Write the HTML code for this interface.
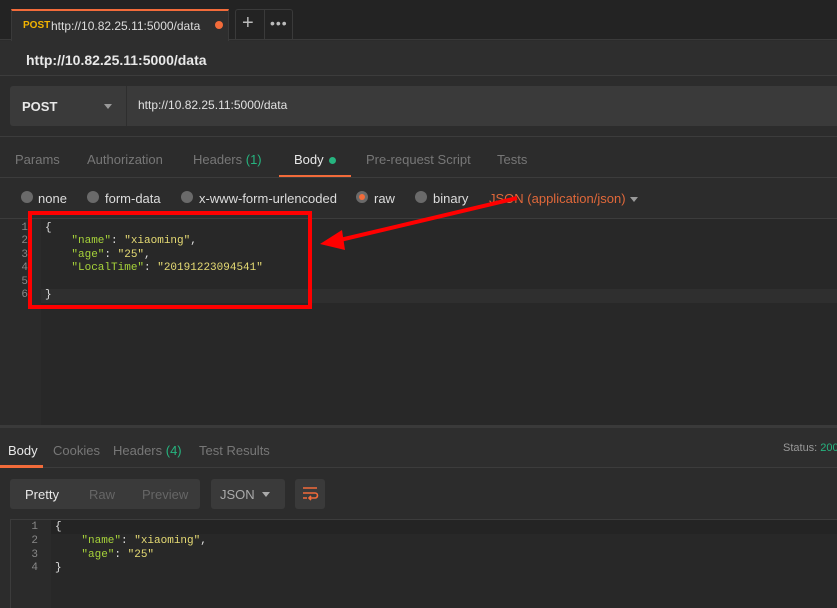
<!DOCTYPE html>
<html><head><meta charset="utf-8"><style>
*{margin:0;padding:0;box-sizing:border-box}
body{width:837px;height:608px;overflow:hidden;background:#2c2c2c;font-family:"Liberation Sans",sans-serif;font-size:12px;color:#ccc;position:relative}
.a{position:absolute;white-space:nowrap}
.mono{font-family:"Liberation Mono",monospace;font-size:11px}
.k{color:#a6d23a}.s{color:#e6db74}.w{color:#e0e0e0}
.ln{color:#888;text-align:right;width:28px}
.dot{width:12px;height:12px;border-radius:50%;background:#6a6a6a}
.t{font-size:13px}
</style></head><body>
<!-- tab bar -->
<div class="a" style="left:0;top:0;width:837px;height:40px;background:#232323;border-bottom:1px solid #3a3a3a"></div>
<div class="a" style="left:11px;top:9px;width:218px;height:32px;background:#2e2e2e;border-top:2px solid #f26b3a;border-left:1px solid #3a3a3a;border-right:1px solid #3a3a3a"></div>
<div class="a" style="left:23px;top:20px;font-size:10px;font-weight:bold;color:#f4b400">POST</div>
<div class="a" style="left:51px;top:19px;font-size:12px;color:#ddd">http://10.82.25.11:5000/data</div>
<div class="a" style="left:215px;top:21px;width:8px;height:8px;border-radius:50%;background:#f26b3a"></div>
<div class="a" style="left:235px;top:9px;width:58px;height:31px;border:1px solid #3a3a3a;border-bottom:none;border-radius:3px 3px 0 0"></div>
<div class="a" style="left:264px;top:10px;width:1px;height:30px;background:#3a3a3a"></div>
<div class="a" style="left:242px;top:12px;font-size:20px;color:#bbb">+</div>
<div class="a" style="left:270px;top:15px;font-size:14px;color:#bbb;letter-spacing:1px">•••</div>
<!-- title -->
<div class="a" style="left:0;top:41px;width:837px;height:35px;background:#2e2e2e;border-bottom:1px solid #3c3c3c"></div>
<div class="a" style="left:26px;top:52px;font-size:14px;font-weight:bold;color:#e8e8e8">http://10.82.25.11:5000/data</div>
<!-- url -->
<div class="a" style="left:10px;top:86px;width:827px;height:40px;background:#3a3a3a;border-radius:3px 0 0 3px"></div>
<div class="a" style="left:126px;top:86px;width:1px;height:40px;background:#2e2e2e"></div>
<div class="a" style="left:22px;top:99px;font-size:13px;font-weight:bold;color:#e8e8e8">POST</div>
<div class="a" style="left:104px;top:104px;border-left:4px solid transparent;border-right:4px solid transparent;border-top:5px solid #999"></div>
<div class="a" style="left:138px;top:98px;font-size:12px;color:#e0e0e0">http://10.82.25.11:5000/data</div>
<div class="a" style="left:0;top:136px;width:837px;height:1px;background:#3c3c3c"></div>
<!-- req tabs -->
<div class="a t" style="left:15px;top:152px;color:#777">Params</div>
<div class="a t" style="left:87px;top:152px;color:#777">Authorization</div>
<div class="a t" style="left:193px;top:152px;color:#777">Headers <span style="color:#26b47f">(1)</span></div>
<div class="a t" style="left:294px;top:152px;color:#e8e8e8">Body</div>
<div class="a" style="left:329px;top:157px;width:7px;height:7px;border-radius:50%;background:#26b47f"></div>
<div class="a t" style="left:366px;top:152px;color:#777">Pre-request Script</div>
<div class="a t" style="left:497px;top:152px;color:#777">Tests</div>
<div class="a" style="left:0;top:177px;width:837px;height:1px;background:#3c3c3c"></div>
<div class="a" style="left:279px;top:175px;width:72px;height:2px;background:#f26b3a"></div>
<!-- radios -->
<div class="a dot" style="left:21px;top:191px"></div><div class="a t" style="left:38px;top:191px;color:#ddd">none</div>
<div class="a dot" style="left:87px;top:191px"></div><div class="a t" style="left:105px;top:191px;color:#ddd">form-data</div>
<div class="a dot" style="left:181px;top:191px"></div><div class="a t" style="left:199px;top:191px;color:#ddd">x-www-form-urlencoded</div>
<div class="a dot" style="left:356px;top:191px;border:3px solid #6a6a6a"><div style="width:6px;height:6px;border-radius:50%;background:#f26b3a"></div></div><div class="a t" style="left:374px;top:191px;color:#ddd">raw</div>
<div class="a dot" style="left:415px;top:191px"></div><div class="a t" style="left:433px;top:191px;color:#ddd">binary</div>
<div class="a t" style="left:489px;top:191px;color:#e0683a">JSON (application/json)</div>
<div class="a" style="left:630px;top:197px;border-left:4px solid transparent;border-right:4px solid transparent;border-top:5px solid #999"></div>
<div class="a" style="left:0;top:218px;width:837px;height:1px;background:#3c3c3c"></div>
<!-- editor -->
<div class="a" style="left:0;top:219px;width:837px;height:206px;background:#282828"></div>
<div class="a" style="left:0;top:219px;width:41px;height:206px;background:#2b2b2b"></div>
<div class="a" style="left:41px;top:289px;width:796px;height:14px;background:#2f2f2f"></div>
<div class="a mono" style="left:0;top:222px;line-height:13.4px">
<div class="ln">1</div><div class="ln">2</div><div class="ln">3</div><div class="ln">4</div><div class="ln">5</div><div class="ln">6</div></div>
<div class="a mono w" style="left:45px;top:222px;line-height:13.4px;white-space:pre">{
    <span class="k">"name"</span>: <span class="s">"xiaoming"</span>,
    <span class="k">"age"</span>: <span class="s">"25"</span>,
    <span class="k">"LocalTime"</span>: <span class="s">"20191223094541"</span>

}</div>
<div class="a" style="left:28px;top:211px;width:284px;height:98px;border:4px solid #ff0000"></div>
<svg class="a" style="left:0;top:0" width="837" height="608"><line x1="517" y1="198" x2="340" y2="240" stroke="#ff0000" stroke-width="4"/><polygon points="320,244 342,230 345,250" fill="#ff0000"/></svg>
<!-- response -->
<div class="a" style="left:0;top:425px;width:837px;height:3px;background:#3a3a3a"></div>
<div class="a" style="left:0;top:428px;width:837px;height:40px;background:#2e2e2e;border-bottom:1px solid #3c3c3c"></div>
<div class="a t" style="left:8px;top:443px;color:#e8e8e8">Body</div>
<div class="a t" style="left:53px;top:443px;color:#777">Cookies</div>
<div class="a t" style="left:113px;top:443px;color:#777">Headers <span style="color:#26b47f">(4)</span></div>
<div class="a t" style="left:199px;top:443px;color:#777">Test Results</div>
<div class="a" style="left:0;top:465px;width:43px;height:3px;background:#f26b3a"></div>
<div class="a" style="left:783px;top:442px;font-size:11px;color:#999">Status: <span style="color:#26b47f">200</span></div>
<div class="a" style="left:10px;top:479px;width:190px;height:30px;background:#3a3a3a;border-radius:3px"></div>
<div class="a t" style="left:25px;top:487px;color:#e8e8e8">Pretty</div>
<div class="a t" style="left:89px;top:487px;color:#666">Raw</div>
<div class="a t" style="left:142px;top:487px;color:#666">Preview</div>
<div class="a" style="left:211px;top:479px;width:74px;height:30px;background:#3a3a3a;border-radius:3px"></div>
<div class="a t" style="left:220px;top:487px;color:#aaa">JSON</div>
<div class="a" style="left:262px;top:492px;border-left:4px solid transparent;border-right:4px solid transparent;border-top:5px solid #aaa"></div>
<div class="a" style="left:295px;top:479px;width:30px;height:30px;background:#3a3a3a;border-radius:3px"></div>
<svg class="a" style="left:301px;top:485px" width="18" height="18"><path d="M2 3H16M2 8H14a2.5 2.5 0 0 1 0 5H9M2 13H6M10 11L8 13L10 15" stroke="#f26b3a" stroke-width="1.6" fill="none"/></svg>
<div class="a" style="left:10px;top:519px;width:827px;height:89px;background:#282828;border-top:1px solid #3c3c3c;border-left:1px solid #3c3c3c"></div>
<div class="a" style="left:11px;top:520px;width:40px;height:88px;background:#2b2b2b"></div>
<div class="a" style="left:51px;top:520px;width:786px;height:14px;background:#242424"></div>
<div class="a mono" style="left:10px;top:521px;line-height:13.8px">
<div class="ln">1</div><div class="ln">2</div><div class="ln">3</div><div class="ln">4</div></div>
<div class="a mono w" style="left:55px;top:521px;line-height:13.8px;white-space:pre">{
    <span class="k">"name"</span>: <span class="s">"xiaoming"</span>,
    <span class="k">"age"</span>: <span class="s">"25"</span>
}</div>
</body></html>
